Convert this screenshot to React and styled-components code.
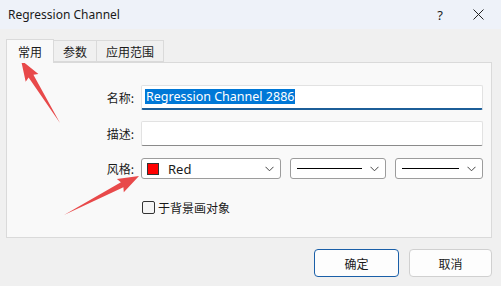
import React from 'react';
import styled, { createGlobalStyle } from 'styled-components';

const Global = createGlobalStyle`
  html, body { margin: 0; padding: 0; }
  body {
    width: 501px;
    height: 286px;
    overflow: hidden;
    background: #f0f0f0;
    font-family: "Noto Sans", "Noto Sans CJK SC", sans-serif;
    color: #1a1a1a;
  }
`;

const Window = styled.div`
  position: relative;
  width: 501px;
  height: 286px;
  display: flex;
  flex-direction: column;
  background: #f0f0f0;
`;

const TitleBar = styled.div`
  height: 29px;
  display: flex;
  align-items: center;
  padding-left: 8px;
  background: #eef2f9;
  font-size: 12px;
`;

const Title = styled.div`
  flex: 1;
  margin-top: -1px;
`;

const TitleButton = styled.div`
  width: ${(p) => p.w}px;
  display: flex;
  justify-content: center;
  align-items: center;
  font-size: 13px;
`;

const Body = styled.div`
  padding: 9px 9px 0 6px;
  display: flex;
  flex-direction: column;
`;

const Tabs = styled.div`
  display: flex;
  align-items: flex-end;
  height: 24px;
`;

const Tab = styled.div`
  height: ${(p) => (p.active ? 24 : 22)}px;
  padding: 0 ${(p) => (p.active ? 11 : 9)}px;
  box-sizing: border-box;
  display: flex;
  align-items: center;
  font-size: 12px;
  font-family: "Noto Sans CJK SC", sans-serif;
  background: ${(p) => (p.active ? '#f9f9f9' : '#f0f0f0')};
  border: 1px solid #dadada;
  border-bottom: ${(p) => (p.active ? 'none' : '1px solid #dadada')};
  margin-left: ${(p) => (p.first ? 0 : -1)}px;
  position: relative;
  z-index: ${(p) => (p.active ? 1 : 0)};
  padding-top: ${(p) => (p.active ? 0 : 1)}px;
  margin-bottom: ${(p) => (p.active ? -1 : 0)}px;
`;

const Panel = styled.div`
  height: 176px;
  box-sizing: border-box;
  background: #f9f9f9;
  border: 1px solid #dadada;
  padding: 22px 9px 0 0;
  display: grid;
  grid-template-columns: 127px 1fr;
  grid-auto-rows: min-content;
  column-gap: 7px;
  align-items: center;
`;

const Label = styled.div`
  text-align: right;
  font-size: 12px;
  font-family: "Noto Sans CJK SC", sans-serif;
  margin-top: ${(p) => p.mt || 0}px;
`;

const Field = styled.div`
  margin-top: ${(p) => p.mt || 0}px;
  height: 25px;
  box-sizing: border-box;
  background: #fff;
  border: 1px solid #e2e2e2;
  border-bottom: ${(p) => (p.focused ? '2px solid #1c5e98' : '1px solid #8a8a8a')};
  border-radius: 2px;
  display: flex;
  align-items: center;
  padding-left: 3px;
`;

const Selected = styled.span`
  background: #0078d7;
  color: #fff;
  font-size: 12.5px;
  line-height: 15px;
  padding: 0 1px;
  margin-top: -1px;
`;

const ComboRow = styled.div`
  margin-top: 12px;
  display: flex;
  gap: 9px;
`;

const Combo = styled.div`
  width: ${(p) => p.w}px;
  height: 21px;
  box-sizing: border-box;
  background: #fff;
  border: 1px solid #9c9c9c;
  border-radius: 3px;
  display: flex;
  align-items: center;
  padding: 0 6px 0 5px;
  font-size: 13px;
`;

const Swatch = styled.span`
  width: 12px;
  height: 12px;
  background: #ff0000;
  box-shadow: 0 0 0 1px #333 inset;
  margin-right: 9px;
`;

const Line = styled.span`
  width: ${(p) => p.w}px;
  height: 1px;
  background: #000;
  margin-left: 1px;
`;

const Spacer = styled.span`
  flex: 1;
`;

const Chevron = () => (
  <svg width="9" height="6" viewBox="0 0 9 6">
    <path d="M0.5 0.8 L4.5 4.8 L8.5 0.8" fill="none" stroke="#444" strokeWidth="1" />
  </svg>
);

const CheckRow = styled.label`
  grid-column: 2;
  margin-top: 20px;
  display: flex;
  align-items: center;
  gap: 3px;
  font-size: 12px;
  font-family: "Noto Sans CJK SC", sans-serif;
`;

const Box = styled.span`
  width: 11px;
  height: 11px;
  border: 1px solid #333;
  border-radius: 2px;
  background: #f5f5f5;
  margin-left: 1px;
`;

const Footer = styled.div`
  display: flex;
  justify-content: flex-end;
  gap: 10px;
  padding-top: 11px;
`;

const Button = styled.div`
  width: ${(p) => (p.primary ? 85 : 83)}px;
  height: 28px;
  box-sizing: border-box;
  border: 1px solid ${(p) => (p.primary ? '#1a5fa8' : '#d0d0d0')};
  border-radius: 4px;
  background: #fdfdfd;
  display: flex;
  align-items: center;
  justify-content: center;
  font-size: 12px;
  font-family: "Noto Sans CJK SC", sans-serif;
`;

const Arrows = styled.svg`
  position: absolute;
  left: 0;
  top: 0;
  pointer-events: none;
`;

const arrow = (x1, y1, x2, y2) => {
  // tail (x1,y1) -> tip (x2,y2), thin tail widening to a barbed head
  const dx = x2 - x1;
  const dy = y2 - y1;
  const len = Math.hypot(dx, dy);
  const ux = dx / len;
  const uy = dy / len;
  const nx = -uy;
  const ny = ux;
  const head = 21;
  const bx = x2 - ux * head;
  const by = y2 - uy * head;
  const p = (x, y) => `${x.toFixed(1)},${y.toFixed(1)}`;
  return [
    p(x1, y1),
    p(bx + nx * 2.8 + ux * 2, by + ny * 2.8 + uy * 2),
    p(bx + nx * 7.5, by + ny * 7.5),
    p(x2, y2),
    p(bx - nx * 7.5, by - ny * 7.5),
    p(bx - nx * 2.8 + ux * 2, by - ny * 2.8 + uy * 2),
  ].join(' ');
};

export default function App() {
  return (
    <>
      <Global />
      <Window>
        <TitleBar>
          <Title>Regression Channel</Title>
          <TitleButton w={30}>?</TitleButton>
          <TitleButton w={46}>
            <svg width="11" height="11" viewBox="0 0 11 11">
              <path d="M0.5 0.5 L10.5 10.5 M10.5 0.5 L0.5 10.5" stroke="#222" strokeWidth="1" />
            </svg>
          </TitleButton>
        </TitleBar>
        <Body>
          <Tabs>
            <Tab active first>常用</Tab>
            <Tab>参数</Tab>
            <Tab>应用范围</Tab>
          </Tabs>
          <Panel>
            <Label>名称:</Label>
            <Field focused>
              <Selected>Regression Channel 2886</Selected>
            </Field>
            <Label mt={11}>描述:</Label>
            <Field mt={11} />
            <Label mt={12}>风格:</Label>
            <ComboRow>
              <Combo w={140}>
                <Swatch />
                Red
                <Spacer />
                <Chevron />
              </Combo>
              <Combo w={96}>
                <Line w={65} />
                <Spacer />
                <Chevron />
              </Combo>
              <Combo w={88}>
                <Line w={57} />
                <Spacer />
                <Chevron />
              </Combo>
            </ComboRow>
            <CheckRow>
              <Box />
              于背景画对象
            </CheckRow>
          </Panel>
          <Footer>
            <Button primary>确定</Button>
            <Button>取消</Button>
          </Footer>
        </Body>
        <Arrows width="501" height="286">
          <polygon points={arrow(60, 123, 21, 60)} fill="#e8494a" />
          <polygon points={arrow(64, 215, 139, 176)} fill="#e8494a" />
        </Arrows>
      </Window>
    </>
  );
}
